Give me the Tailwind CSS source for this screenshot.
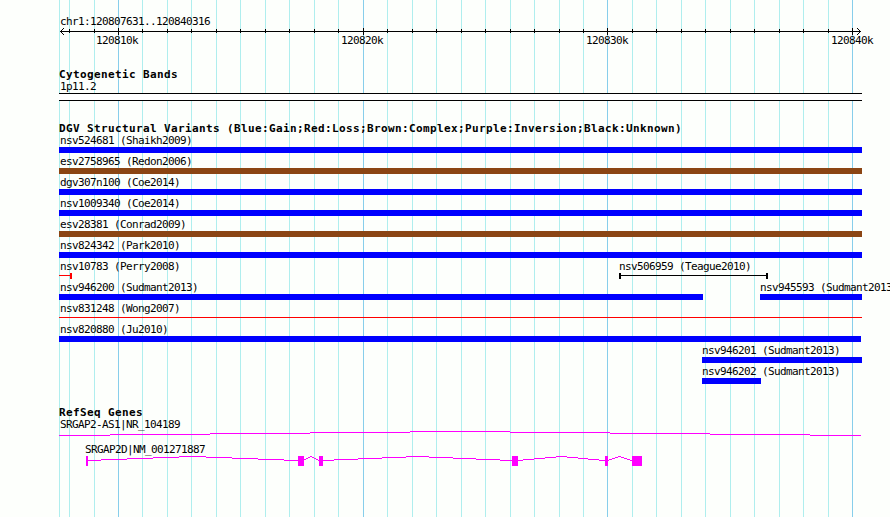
<!DOCTYPE html>
<html lang="en">
<head>
    <meta charset="UTF-8">
    <meta name="viewport" content="width=device-width, initial-scale=1.0">
    <title>chr1:120807631..120840316</title>
    <script src="https://cdn.jsdelivr.net/npm/@tailwindcss/browser@4"></script>
</head>
<body class="bg-[#fdfffc] overflow-hidden">
    <div class="relative w-[890px] h-[517px] overflow-hidden font-['DejaVu_Sans_Mono',monospace] text-[11px] leading-[16px] tracking-[-0.622px] text-black whitespace-nowrap">
        <!-- Grid lines -->
        <svg id="grid" class="absolute inset-0" width="890" height="517" shape-rendering="crispEdges"></svg>

        <div class="relative ml-[59px] w-[803px] pt-[14px]">
            <!-- Ruler -->
            <div class="h-[14px] pl-px">chr1:120807631..120840316</div>
            <svg id="ruler" class="block" width="803" height="7" shape-rendering="crispEdges">
                <path d="M1 3.5H802" stroke="#000" fill="none"/>
                <path d="M4 0h1v1h-1zM3 1h1v1h-1zM2 2h1v1h-1zM2 4h1v1h-1zM3 5h1v1h-1zM4 6h1v1h-1z"/>
                <path d="M798 0h1v1h-1zM799 1h1v1h-1zM800 2h1v1h-1zM800 4h1v1h-1zM799 5h1v1h-1zM798 6h1v1h-1z"/>
            </svg>
            <div class="-mt-[2px] flex h-[14px] gap-[203px] pl-[37px]">
                <span class="w-[42px] shrink-0">120810k</span>
                <span class="w-[42px] shrink-0">120820k</span>
                <span class="w-[42px] shrink-0">120830k</span>
                <span class="w-[42px] shrink-0">120840k</span>
            </div>

            <!-- Cytogenetic bands -->
            <h2 class="mt-5 h-3 font-bold tracking-[0.378px]">Cytogenetic Bands</h2>
            <div class="h-[14px] pl-px">1p11.2</div>
            <div class="h-2 border-y border-black bg-white"></div>

            <!-- Structural variants -->
            <h2 class="mt-5 h-3 font-bold tracking-[0.378px]">DGV Structural Variants (Blue:Gain;Red:Loss;Brown:Complex;Purple:Inversion;Black:Unknown)</h2>
            <div class="h-[21px]">
                <div class="h-[14px] pl-px">nsv524681 (Shaikh2009)</div>
                <div class="h-1.5 bg-[#0000ff]"></div>
            </div>
            <div class="h-[21px]">
                <div class="h-[14px] pl-px">esv2758965 (Redon2006)</div>
                <div class="h-1.5 bg-[#8b4513]"></div>
            </div>
            <div class="h-[21px]">
                <div class="h-[14px] pl-px">dgv307n100 (Coe2014)</div>
                <div class="h-1.5 bg-[#0000ff]"></div>
            </div>
            <div class="h-[21px]">
                <div class="h-[14px] pl-px">nsv1009340 (Coe2014)</div>
                <div class="h-1.5 bg-[#0000ff]"></div>
            </div>
            <div class="h-[21px]">
                <div class="h-[14px] pl-px">esv28381 (Conrad2009)</div>
                <div class="h-1.5 bg-[#8b4513]"></div>
            </div>
            <div class="h-[21px]">
                <div class="h-[14px] pl-px">nsv824342 (Park2010)</div>
                <div class="h-1.5 bg-[#0000ff]"></div>
            </div>
            <div class="flex h-[21px]">
                <div class="w-[560px] shrink-0">
                    <div class="h-[14px] pl-px">nsv10783 (Perry2008)</div>
                    <div class="flex h-1.5 w-[13px] items-start border-r-2 border-[#ff0000]">
                        <div class="mt-[2px] h-px w-full bg-[#ff0000]"></div>
                    </div>
                </div>
                <div class="w-[149px] shrink-0">
                    <div class="h-[14px]">nsv506959 (Teague2010)</div>
                    <div class="flex h-1.5 items-start border-x-2 border-black">
                        <div class="mt-[2px] h-px w-full bg-black"></div>
                    </div>
                </div>
            </div>
            <div class="flex h-[21px]">
                <div class="w-[644px] shrink-0">
                    <div class="h-[14px] pl-px">nsv946200 (Sudmant2013)</div>
                    <div class="h-1.5 bg-[#0000ff]"></div>
                </div>
                <div class="ml-[57px] w-[102px] shrink-0">
                    <div class="h-[14px]">nsv945593 (Sudmant2013)</div>
                    <div class="h-1.5 bg-[#0000ff]"></div>
                </div>
            </div>
            <div class="h-[21px]">
                <div class="h-[14px] pl-px">nsv831248 (Wong2007)</div>
                <div class="mt-[2px] h-px bg-[#ff0000]"></div>
            </div>
            <div class="h-[21px]">
                <div class="h-[14px] pl-px">nsv820880 (Ju2010)</div>
                <div class="h-1.5 w-[802px] bg-[#0000ff]"></div>
            </div>
            <div class="ml-[643px] h-[21px]">
                <div class="h-[14px]">nsv946201 (Sudmant2013)</div>
                <div class="h-1.5 bg-[#0000ff]"></div>
            </div>
            <div class="ml-[643px] h-[21px]">
                <div class="h-[14px]">nsv946202 (Sudmant2013)</div>
                <div class="h-1.5 w-[59px] bg-[#0000ff]"></div>
            </div>

            <!-- Genes -->
            <h2 class="mt-5 h-3 font-bold tracking-[0.378px]">RefSeq Genes</h2>
            <div class="h-[14px] pl-px">SRGAP2-AS1|NR_104189</div>
            <svg class="block" width="803" height="5" viewBox="59 431 803 5" shape-rendering="crispEdges">
                <path fill="none" stroke="#ff00ff" d="M59 435.5H110M110 434.5H210M210 433.5H310M310 432.5H410M410 431.5H510M510 432.5H610M610 433.5H710M710 434.5H810M810 435.5H861"/>
            </svg>
            <div class="mt-1.5 h-[14px] pl-[26px]">SRGAP2D|NM_001271887</div>
            <svg class="block" width="803" height="10" viewBox="59 456 803 10" shape-rendering="crispEdges">
                <path fill="#ff00ff" d="M86 456h2v10h-2zM298 456h6v10h-6zM319 456h4v10h-4zM512 456h6v10h-6zM605 456h3v10h-3zM632 456h10v10h-10z"/>
                <g fill="none" stroke="#ff00ff">
                    <path d="M88 460.5H101M101 459.5H127M127 458.5H153M153 457.5H179M179 456.5H206M206 457.5H232M232 458.5H258M258 459.5H284M284 460.5H298"/>
                    <path d="M304 459.5H306M306 458.5H308M308 457.5H310M310 456.5H312M312 457.5H314M314 458.5H316M316 459.5H318M318 460.5H319"/>
                    <path d="M323 460.5H334M334 459.5H358M358 458.5H382M382 457.5H406M406 456.5H429M429 457.5H453M453 458.5H476M476 459.5H500M500 460.5H512"/>
                    <path d="M518 460.5H523M523 459.5H534M534 458.5H545M545 457.5H556M556 456.5H567M567 457.5H578M578 458.5H588M588 459.5H599M599 460.5H605"/>
                    <path d="M608 460.5H609M609 459.5H612M612 458.5H615M615 457.5H618M618 456.5H621M621 457.5H624M624 458.5H627M627 459.5H630M630 460.5H632"/>
                </g>
            </svg>
        </div>
    </div>

    <script>
        const NS = 'http://www.w3.org/2000/svg';
        const grid = document.getElementById('grid');
        const ruler = document.getElementById('ruler');

        function addRect(svg, x, y, height, fill) {
            const rect = document.createElementNS(NS, 'rect');
            rect.setAttribute('x', x);
            rect.setAttribute('y', y);
            rect.setAttribute('width', 1);
            rect.setAttribute('height', height);
            rect.setAttribute('fill', fill);
            svg.appendChild(rect);
        }

        // left edge of the region
        addRect(grid, 59, 0, 517, '#afeeee');

        // one line per 1 kb, every tenth is a major one
        for (let kb = 808; kb <= 840; kb++) {
            const x = Math.round(118.01 + (kb - 810) * 24.472);
            const major = kb % 10 === 0;
            addRect(grid, x, 0, 517, major ? '#87ceeb' : '#afeeee');
            addRect(ruler, x - 59, major ? 0 : 1, major ? 7 : 4, '#000');
        }
    </script>
</body>
</html>
